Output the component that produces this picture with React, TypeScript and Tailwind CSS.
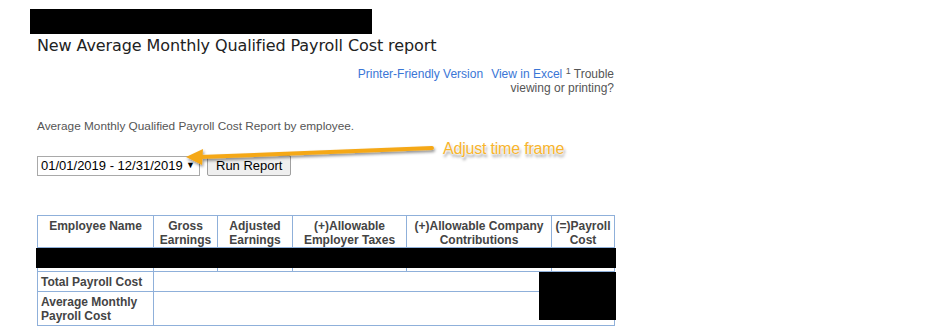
import React from "react"

const headers = [
  { label: ["Employee Name"], w: "w-[116px]" },
  { label: ["Gross", "Earnings"], w: "w-[64px]" },
  { label: ["Adjusted", "Earnings"], w: "w-[75px]" },
  { label: ["(+)Allowable", "Employer Taxes"], w: "w-[114px]" },
  { label: ["(+)Allowable Company", "Contributions"], w: "w-[145px]" },
  { label: ["(=)Payroll", "Cost"], w: "w-[63px]" },
]

function Annotation() {
  return (
    <div className="pointer-events-none absolute left-0 top-0 h-[332px] w-[936px]">
      <svg width="936" height="332" className="absolute left-0 top-0">
        <defs>
          <filter id="sh" x="-20%" y="-50%" width="140%" height="200%">
            <feDropShadow dx="1" dy="2" stdDeviation="1.5" floodColor="#000" floodOpacity="0.45" />
          </filter>
        </defs>
        <g filter="url(#sh)">
          <line x1="432" y1="148" x2="200" y2="157" stroke="#f5a818" strokeWidth="4" strokeLinecap="round" />
          <polygon points="186,157 203,149 202,165" fill="#f5a818" />
        </g>
      </svg>
      <div
        className="absolute left-[443px] top-[140px] text-[16px] leading-[18px] tracking-[-0.2px] text-[#f7b42c] [font-family:'Liberation_Sans',Arial,sans-serif]"
        style={{ textShadow: "0 0 2px #fff, 0 0 2px #fff, 0 0 3px #fff, 1px 3px 3px rgba(0,0,0,0.45)" }}
      >
        Adjust time frame
      </div>
    </div>
  )
}

export default function App() {
  return (
    <div className="relative h-[332px] w-[936px] overflow-hidden bg-white [font-family:'Liberation_Sans',Arial,sans-serif]">
      <div className="ml-[30px] mt-[9px] h-[25px] w-[342px] bg-black" />
      <div className="pl-[37px]">
        <h1 className="mt-[2px] text-[16px] leading-[20px] text-[#222] [font-family:'DejaVu_Sans',Verdana,sans-serif] tracking-[-0.1px]">
          New Average Monthly Qualified Payroll Cost report
        </h1>

        <div className="mt-[11px] w-[577px] text-right text-[12px] leading-[14px] text-[#555]">
          <a className="text-[#3a76d6]">Printer-Friendly Version</a>
          <span className="ml-[8px] text-[#3a76d6]">View in Excel</span>{" "}
          <sup className="text-[9px]">1</sup> Trouble
          <br />
          viewing or printing?
        </div>

        <p className="mt-[24px] text-[11.8px] leading-[14px] text-[#555]">
          Average Monthly Qualified Payroll Cost Report by employee.
        </p>

        <div className="mt-[22px] flex items-center gap-[7px]">
          <div className="flex h-[20px] w-[163px] items-center justify-between border border-[#a9a9a9] bg-white pl-[3px] pr-[4px] text-[13px] text-black">
            <span>01/01/2019 - 12/31/2019</span>
            <span className="text-[9px]">▼</span>
          </div>
          <button className="h-[21px] rounded-[2px] border border-[#a0a0a0] bg-[#efefef] px-[8px] text-[13px] leading-[17px] text-black">
            Run Report
          </button>
        </div>

        <table className="mt-[39px] w-[577px] table-fixed border-collapse text-[12px] leading-[14px] text-[#444]">
          <thead>
            <tr className="h-[32px]">
              {headers.map((h, i) => (
                <th key={i} className={`${h.w} border border-[#8fb0da] px-[2px] pb-0 pt-[3px] text-center align-top font-bold`}>
                  {h.label.map((l, j) => (
                    <div key={j}>{l}</div>
                  ))}
                </th>
              ))}
            </tr>
          </thead>
          <tbody>
            <tr className="h-[24px]">
              {headers.map((_, i) => (
                <td key={i} className="border border-[#8fb0da]" />
              ))}
            </tr>
            <tr className="h-[20px]">
              <td className="border border-[#8fb0da] px-[3px] font-bold">Total Payroll Cost</td>
              <td colSpan={5} className="border border-[#8fb0da]" />
            </tr>
            <tr className="h-[34px]">
              <td className="border border-[#8fb0da] px-[3px] py-[2px] font-bold">
                Average Monthly
                <br />
                Payroll Cost
              </td>
              <td colSpan={5} className="border border-[#8fb0da]" />
            </tr>
          </tbody>
        </table>
      </div>

      {/* redactions */}
      <div className="absolute left-[36px] top-[248px] h-[20px] w-[580px] bg-black" />
      <div className="absolute left-[539px] top-[272px] h-[48px] w-[77px] bg-black" />

      <Annotation />
    </div>
  )
}
